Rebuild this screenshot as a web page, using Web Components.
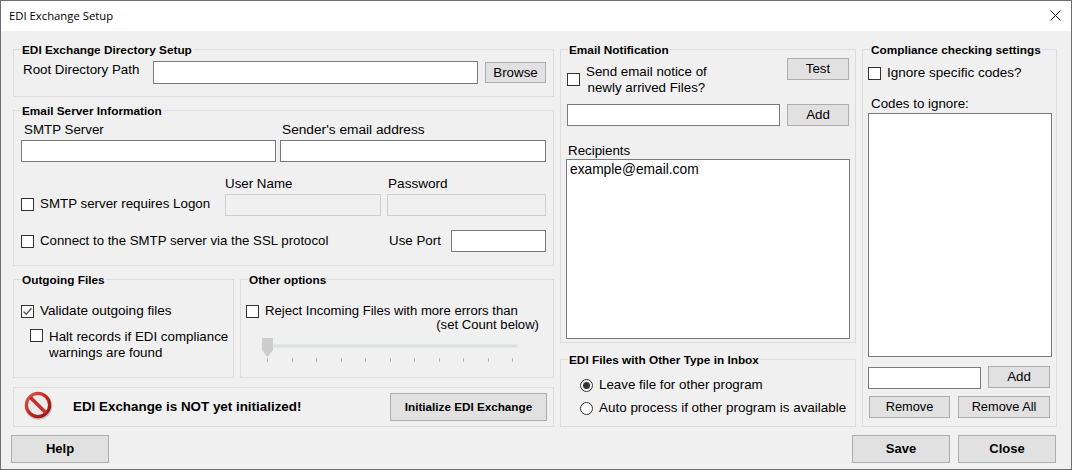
<!DOCTYPE html>
<html>
<head>
<meta charset="utf-8">
<title>EDI Exchange Setup</title>
<style>
html,body{margin:0;padding:0;background:#f0f0f0;}
</style>
</head>
<body>
<edi-setup></edi-setup>
<script>
const UI_FONT = '13.33px/16px "Liberation Sans",Arial,sans-serif'

class WinButton extends HTMLElement{
    constructor(){
        super()
        this.attachShadow({mode:'open'})
        this.shadowRoot.innerHTML = `
            <style>
                :host{
                    display:flex;
                    align-items:center;
                    justify-content:center;
                    box-sizing:border-box;
                    height:22px;
                    background:#e1e1e1;
                    border:1px solid #adadad;
                    font:${UI_FONT};
                    color:#000;
                }
                :host([strong]){font-weight:bold;}
            </style>
            <slot></slot>
        `
    }
}
customElements.define('win-button', WinButton)

class WinInput extends HTMLElement{
    constructor(){
        super()
        this.attachShadow({mode:'open'})
        this.shadowRoot.innerHTML = `
            <style>
                :host{
                    display:block;
                    box-sizing:border-box;
                    height:22px;
                    background:#fff;
                    border:1px solid #7a7a7a;
                    padding:1px 3px;
                    font:${UI_FONT};
                }
                :host([disabled]){background:#f0f0f0;border-color:#cfcfcf;}
            </style>
            <slot></slot>
        `
    }
}
customElements.define('win-input', WinInput)

class WinCheck extends HTMLElement{
    constructor(){
        super()
        this.attachShadow({mode:'open'})
        this.shadowRoot.innerHTML = `
            <style>
                :host{
                    display:flex;
                    align-items:center;
                    gap:6px;
                    font:${UI_FONT};
                    color:#000;
                }
                #box{
                    flex:none;
                    box-sizing:border-box;
                    width:13px;
                    height:13px;
                    background:#fff;
                    border:1px solid #333;
                }
                svg{display:none;width:11px;height:11px;}
                :host([checked]) svg{display:block;}
                :host([top]){align-items:flex-start;}
                :host([raise]) #box{margin-top:-2px;}
            </style>
            <div id="box"><svg viewBox="0 0 11 11"><path d="M1.5 5.5 4.2 8.3 9.5 2.2" fill="none" stroke="#555" stroke-width="1.3"/></svg></div>
            <div><slot></slot></div>
        `
    }
}
customElements.define('win-check', WinCheck)

class WinRadio extends HTMLElement{
    constructor(){
        super()
        this.attachShadow({mode:'open'})
        this.shadowRoot.innerHTML = `
            <style>
                :host{
                    display:flex;
                    align-items:center;
                    gap:6px;
                    font:${UI_FONT};
                    color:#000;
                }
                svg{flex:none;width:13px;height:13px;}
                circle.dot{display:none;}
                :host([checked]) circle.dot{display:block;}
            </style>
            <svg viewBox="0 0 13 13">
                <circle cx="6.5" cy="6.5" r="6" fill="#fff" stroke="#333"/>
                <circle class="dot" cx="6.5" cy="6.5" r="3.5" fill="#333"/>
            </svg>
            <div><slot></slot></div>
        `
    }
}
customElements.define('win-radio', WinRadio)

class WinGroup extends HTMLElement{
    constructor(){
        super()
        this.attachShadow({mode:'open'})
        this.shadowRoot.innerHTML = `
            <style>
                :host{
                    display:block;
                    box-sizing:border-box;
                    border:1px solid #dcdcdc;
                    font:${UI_FONT};
                }
                #title{
                    display:block;
                    width:fit-content;
                    margin:-7px 0 0 7px;
                    padding:0 1px;
                    height:13px;
                    background:#f0f0f0;
                    font:bold 11.8px/15px "Liberation Sans",Arial,sans-serif;
                    color:#000;
                }
                #title:empty{display:none;}
            </style>
            <div id="title"></div>
            <slot></slot>
        `
    }
    connectedCallback(){
        this.shadowRoot.querySelector('#title').textContent = this.getAttribute('title') || ''
    }
}
customElements.define('win-group', WinGroup)

class WinSlider extends HTMLElement{
    constructor(){
        super()
        this.attachShadow({mode:'open'})
        let ticks = ''
        for(let i = 0; i < 11; i++) ticks += '<i></i>'
        this.shadowRoot.innerHTML = `
            <style>
                :host{display:block;width:256px;height:24px;}
                #rail{display:flex;height:19px;}
                #thumb{flex:none;width:11px;height:19px;}
                #track{flex:1;box-sizing:border-box;height:4px;margin-top:6px;background:#d9e0df;border:1px solid #e6e6e6;}
                #ticks{display:flex;justify-content:space-between;margin:1px 5px 0;height:4px;}
                i{display:block;width:1px;height:4px;background:#b4b4b4;}
            </style>
            <div id="rail">
                <svg id="thumb" viewBox="0 0 11 19"><path d="M0 0H11V12L5.5 19 0 12Z" fill="#cdcdcd"/></svg>
                <div id="track"></div>
            </div>
            <div id="ticks">${ticks}</div>
        `
    }
}
customElements.define('win-slider', WinSlider)

class StopIcon extends HTMLElement{
    constructor(){
        super()
        this.attachShadow({mode:'open'})
        this.shadowRoot.innerHTML = `
            <style>:host{display:block;width:29px;height:29px;}svg{display:block;}</style>
            <svg width="29" height="29" viewBox="0 0 29 29">
                <defs>
                    <linearGradient id="ring" x1="0" y1="0" x2="1" y2="1">
                        <stop offset="0" stop-color="#dd5f55"/>
                        <stop offset=".5" stop-color="#c4231c"/>
                        <stop offset="1" stop-color="#8e1512"/>
                    </linearGradient>
                </defs>
                <circle cx="14.5" cy="15" r="13.8" fill="#8a8a8a" opacity=".45"/>
                <circle cx="14" cy="14" r="11.6" fill="#ece9e9" stroke="url(#ring)" stroke-width="3.2"/>
                <path d="M6 6 22 22" stroke="#c4302a" stroke-width="3.6"/>
            </svg>
        `
    }
}
customElements.define('stop-icon', StopIcon)

class EdiSetup extends HTMLElement{
    constructor(){
        super()
        this.attachShadow({mode:'open'})
        this.shadowRoot.innerHTML = `
            <style>
                :host{
                    display:flex;
                    flex-direction:column;
                    box-sizing:border-box;
                    width:1072px;
                    height:470px;
                    background:#f0f0f0;
                    border:1px solid #6e6e6e;
                    font:${UI_FONT};
                    color:#000;
                    overflow:hidden;
                }
                #titlebar{
                    flex:none;
                    display:flex;
                    align-items:center;
                    justify-content:space-between;
                    box-sizing:border-box;
                    height:30px;
                    padding:0 10px 2px 8px;
                    background:#fff;
                    font:11.3px "Open Sans",sans-serif;
                }
                #main{
                    flex:none;
                    display:grid;
                    grid-template-columns:541px 296px 195px;
                    gap:0 6px;
                    padding:18px 0 0 12px;
                    height:396px;
                    box-sizing:border-box;
                }
                .col{display:flex;flex-direction:column;}
                #dir{height:48px;margin-bottom:13px;}
                #dir .row{display:grid;grid-template-columns:123px 325px 61px;column-gap:7px;padding:5px 0 0 9px;}
                #dir .row > span{margin-top:1px;}
                #dir win-input{height:23px;}
                #dir win-button{margin-top:1px;height:21px;}
                #server{height:156px;margin-bottom:13px;}
                #server .labels{display:grid;grid-template-columns:258px 1fr;padding:5px 0 0 10px;}
                #sender{font-size:13.7px;}
                #server .inputs{display:grid;grid-template-columns:255px 266px;column-gap:4px;padding:2px 0 0 7px;}
                #logon{display:grid;grid-template-columns:204px 156px 6px 159px;grid-template-rows:18px 22px;padding:14px 0 0 7px;}
                #logon win-check{grid-row:2;grid-column:1;align-self:start;margin-top:2px;}
                #logon .user{grid-row:1;grid-column:2;}
                #logon .pass{grid-row:1;grid-column:4;padding-left:1px;font-size:13.6px;}
                #logon .u{grid-row:2;grid-column:2;}
                #logon .p{grid-row:2;grid-column:4;}
                #ssl{display:grid;grid-template-columns:368px 62px 95px;align-items:center;padding:14px 0 0 7px;}
                #sslcheck{font-size:13.24px;}
                #pair{display:grid;grid-template-columns:221px 314px;column-gap:6px;height:99px;margin-bottom:9px;}
                #validate{padding:17px 0 0 7px;}
                #validatecheck{font-size:13.55px;}
                #halt{margin:10px 0 0 9px;}
                #reject{padding:17px 0 0 5px;}
                #rejectcheck{font-size:13.12px;}
                #countnote{text-align:right;margin:-2px 14px 0 0;font-size:13.12px;}
                #reject win-slider{margin:5px 0 0 16px;}
                #status{height:40px;display:flex;align-items:center;padding:0 6px 0 10px;}
                #status stop-icon{margin:0 20px 3px 0;}
                #status b{flex:1;font-size:13.4px;}
                #status win-button{width:157px;height:28px;font-size:11.7px;}
                #notify{height:294px;margin-bottom:16px;}
                #notifyhead{display:flex;justify-content:space-between;padding:2px 6px 0 6px;}
                #notifyhead win-button{width:62px;}
                #notifyhead win-check{margin-top:6px;}
                #notifyhead .txt{text-align:center;}
                #addrow{display:grid;grid-template-columns:213px 62px;column-gap:7px;padding:8px 0 0 6px;}
                #reciplabel{padding:17px 0 0 7px;}
                #recip{height:180px;margin:0 0 0 5px;width:284px;padding-top:2px;font-size:13.75px;}
                #inbox{height:68px;}
                #inbox win-radio{margin-left:19px;}
                #inbox win-radio:first-of-type{margin-top:11px;}
                #inbox win-radio + win-radio{margin-top:7px;font-size:13.44px;}
                #codes{height:378px;}
                #codes .inner{padding:0 5px;}
                #codes win-check{margin:9px 0 0 0;font-size:13.53px;}
                #codes .lbl{padding:15px 0 1px 3px;}
                #codelist{height:244px;width:184px;}
                #coderow{display:grid;grid-template-columns:113px 62px;column-gap:7px;margin-top:10px;}
                #coderow win-button{margin-top:-1px;}
                #rembtns{display:grid;grid-template-columns:81px 92px;column-gap:8px;margin:7px 0 0 1px;}
                #rembtns win-button{font-size:12.8px;}
                #footer{
                    flex:none;
                    display:flex;
                    justify-content:space-between;
                    padding:8px 15px 0 10px;
                }
                #footer win-button{width:98px;height:28px;font-size:13px;}
                #footer div{display:flex;gap:8px;}
                #x{width:11px;height:11px;display:block;}
            </style>
            <div id="titlebar">
                <span>EDI Exchange Setup</span>
                <svg id="x" viewBox="0 0 11 11"><path d="M.5.5 10.5 10.5M10.5.5.5 10.5" stroke="#111" stroke-width="1" fill="none"/></svg>
            </div>
            <div id="main">
                <div class="col">
                    <win-group id="dir" title="EDI Exchange Directory Setup">
                        <div class="row">
                            <span>Root Directory Path</span>
                            <win-input></win-input>
                            <win-button>Browse</win-button>
                        </div>
                    </win-group>
                    <win-group id="server" title="Email Server Information">
                        <div class="labels"><span>SMTP Server</span><span id="sender">Sender's email address</span></div>
                        <div class="inputs"><win-input></win-input><win-input></win-input></div>
                        <div id="logon">
                            <win-check>SMTP server requires Logon</win-check>
                            <span class="user">User Name</span>
                            <span class="pass">Password</span>
                            <win-input class="u" disabled></win-input>
                            <win-input class="p" disabled></win-input>
                        </div>
                        <div id="ssl">
                            <win-check id="sslcheck">Connect to the SMTP server via the SSL protocol</win-check>
                            <span>Use Port</span>
                            <win-input></win-input>
                        </div>
                    </win-group>
                    <div id="pair">
                        <win-group title="Outgoing Files">
                            <div id="validate">
                                <win-check id="validatecheck" checked>Validate outgoing files</win-check>
                                <win-check id="halt" top>Halt records if EDI compliance<br>warnings are found</win-check>
                            </div>
                        </win-group>
                        <win-group title="Other options">
                            <div id="reject">
                                <win-check id="rejectcheck">Reject Incoming Files with more errors than</win-check>
                                <div id="countnote">(set Count below)</div>
                                <win-slider></win-slider>
                            </div>
                        </win-group>
                    </div>
                    <win-group id="status">
                        <stop-icon></stop-icon>
                        <b>EDI Exchange is NOT yet initialized!</b>
                        <win-button strong>Initialize EDI Exchange</win-button>
                    </win-group>
                </div>
                <div class="col">
                    <win-group id="notify" title="Email Notification">
                        <div id="notifyhead">
                            <win-check raise><div class="txt">Send email notice of<br>newly arrived Files?</div></win-check>
                            <win-button>Test</win-button>
                        </div>
                        <div id="addrow"><win-input></win-input><win-button>Add</win-button></div>
                        <div id="reciplabel">Recipients</div>
                        <win-input id="recip">example@email.com</win-input>
                    </win-group>
                    <win-group id="inbox" title="EDI Files with Other Type in Inbox">
                        <win-radio checked>Leave file for other program</win-radio>
                        <win-radio>Auto process if other program is available</win-radio>
                    </win-group>
                </div>
                <div class="col">
                    <win-group id="codes" title="Compliance checking settings">
                        <div class="inner">
                            <win-check>Ignore specific codes?</win-check>
                            <div class="lbl">Codes to ignore:</div>
                            <win-input id="codelist"></win-input>
                            <div id="coderow"><win-input></win-input><win-button>Add</win-button></div>
                            <div id="rembtns"><win-button>Remove</win-button><win-button>Remove All</win-button></div>
                        </div>
                    </win-group>
                </div>
            </div>
            <div id="footer">
                <win-button strong>Help</win-button>
                <div><win-button strong>Save</win-button><win-button strong>Close</win-button></div>
            </div>
        `
    }
}
customElements.define('edi-setup', EdiSetup)
</script>
</body>
</html>
